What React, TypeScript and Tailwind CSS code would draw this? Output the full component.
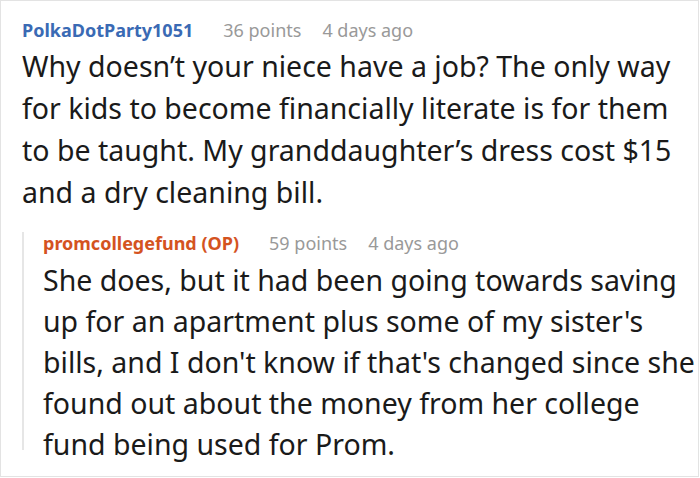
import React from "react";

export default function App() {
  return (
    <div
      className="w-[699px] h-[477px] border border-[#e3e3e3] bg-white overflow-hidden"
      style={{ fontFamily: '"Noto Sans", sans-serif' }}
    >
      <div className="pl-[21px] pr-[2px] pt-[18px]">
        <div className="flex items-center h-[22px] text-[18px] leading-[22px]">
          <span className="font-bold text-[#3a6ab4]">PolkaDotParty1051</span>
          <span className="ml-[30px] text-[#999999]">36 points</span>
          <span className="ml-[21px] text-[#999999]">4 days ago</span>
        </div>
        <p className="mt-[4px] text-[28.5px] leading-[42px] text-[#1a1a1a]">
          Why doesn’t your niece have a job? The only way for kids to become financially literate is for them to be taught. My granddaughter’s dress cost $15 and a dry cleaning bill.
        </p>
        <div className="mt-[29px] border-l-2 border-[#e6e6e6] pl-[19px] pb-0 h-[218px]">
          <div className="-mt-[10px] flex items-center h-[22px] text-[18px] leading-[22px]">
            <span className="font-bold text-[#d4531f]">promcollegefund (OP)</span>
            <span className="ml-[30px] text-[#999999]">59 points</span>
            <span className="ml-[21px] text-[#999999]">4 days ago</span>
          </div>
          <p className="mt-[6px] text-[28.5px] leading-[41px] text-[#1a1a1a]">
            She does, but it had been going towards saving up for an apartment plus some of my sister's bills, and I don't know if that's changed since she found out about the money from her college fund being used for Prom.
          </p>
        </div>
      </div>
    </div>
  );
}
